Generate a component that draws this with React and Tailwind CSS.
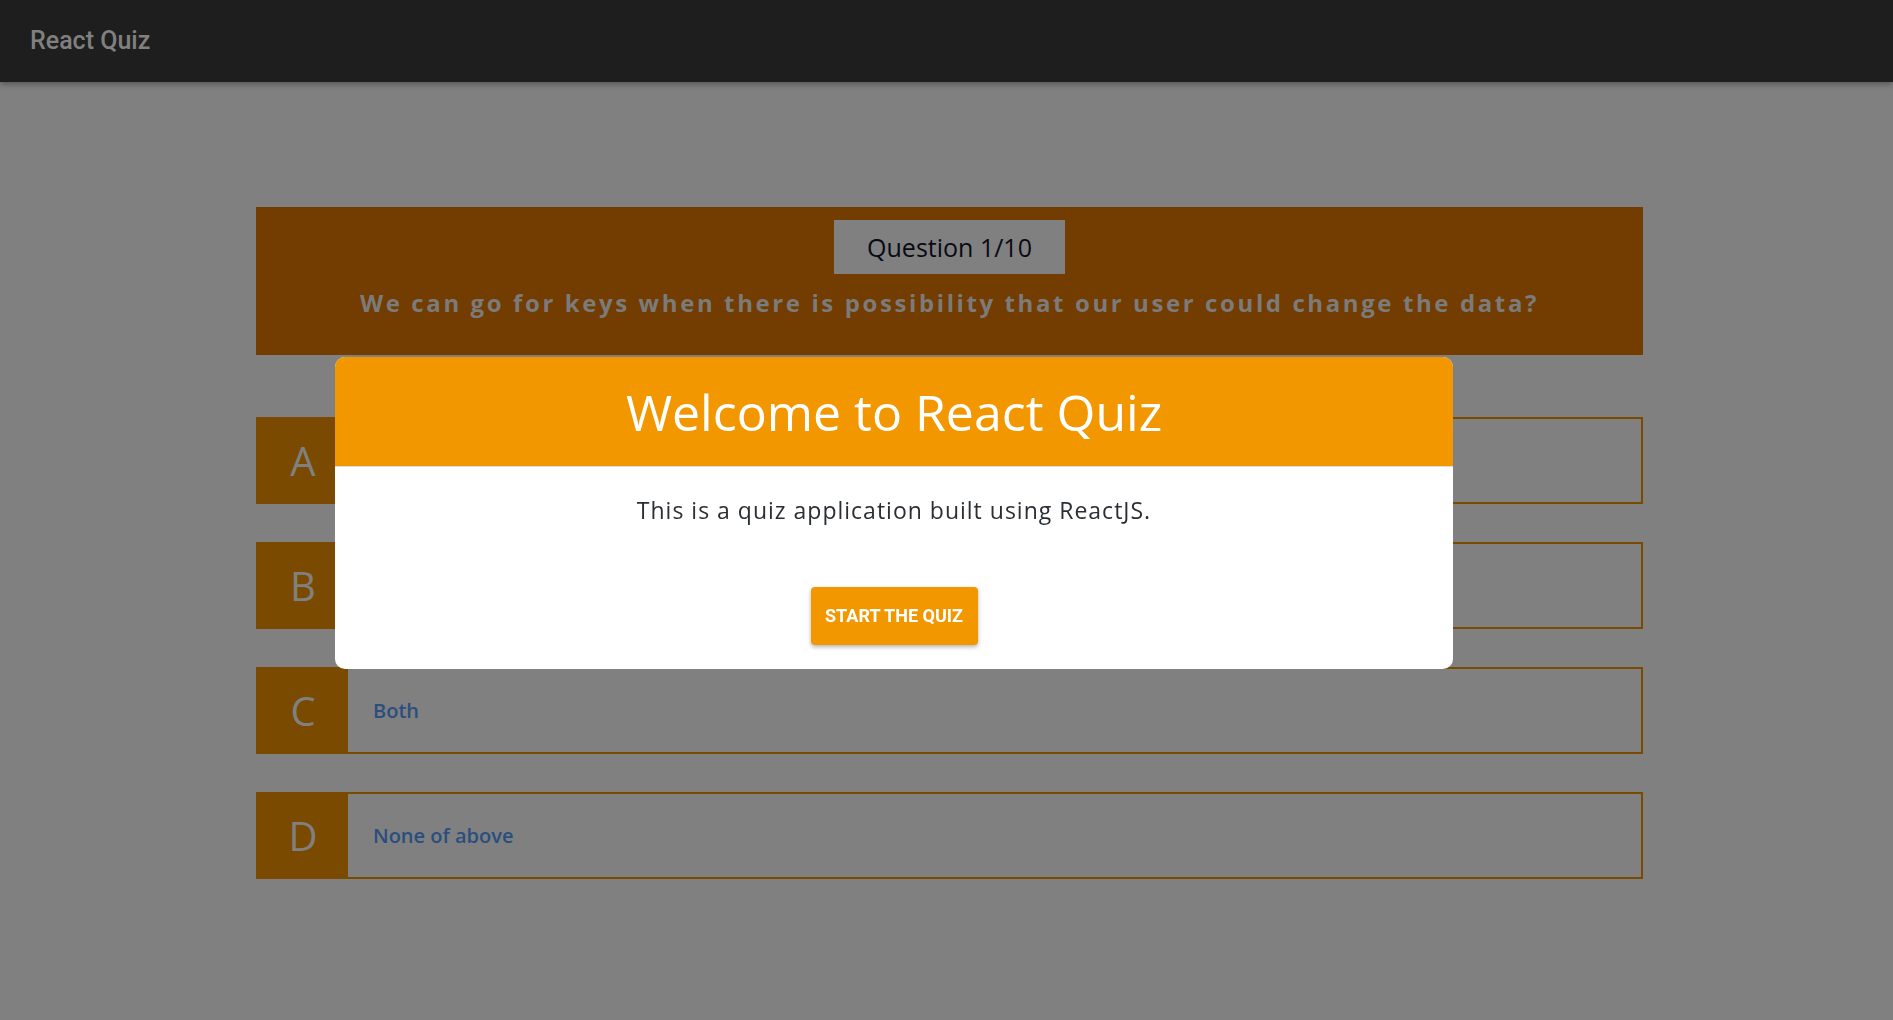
import React from "react";

const answers = [
  { key: "A", text: "" },
  { key: "B", text: "" },
  { key: "C", text: "Both" },
  { key: "D", text: "None of above" },
];

const open = { fontFamily: "'Open Sans', 'Noto Sans', sans-serif" };
const roboto = { fontFamily: "Roboto, 'Liberation Sans', sans-serif" };

export default function App() {
  return (
    <div className="min-h-[1020px] bg-[#808080]" style={open}>
      <header className="h-[82px] bg-[#1e1e1e] flex items-center px-[30px] shadow-[0_2px_6px_rgba(0,0,0,0.35)]">
        <div className="text-[25px] font-medium text-[#808080]" style={roboto}>React Quiz</div>
      </header>

      <main className="ml-[256px] w-[1387px] pt-[125px]">
        <div className="bg-[#733c00] h-[148px] flex flex-col items-center pt-[13px]">
          <div className="w-[231px] h-[54px] bg-[#808080] flex items-center justify-center pt-[2px] text-[25px] text-[#0a0a14]">
            Question 1/10
          </div>
          <div className="mt-[11px] text-[24px] font-bold tracking-[2.6px] text-[#7b7b7b]">
            We can go for keys when there is possibility that our user could change the data?
          </div>
        </div>

        <div className="mt-[62px] flex flex-col gap-[38px]">
          {answers.map((a) => (
            <div key={a.key} className="h-[87px] flex border-2 border-[#7a4a00]">
              <div className="w-[92px] -ml-[2px] -my-[2px] pl-[2px] bg-[#7a4a00] flex items-center justify-center text-[40px] text-[#808080]">
                {a.key}
              </div>
              <div className="flex items-center pl-[25px] text-[20px] font-semibold text-[#2a4e7e]">{a.text}</div>
            </div>
          ))}
        </div>
      </main>

      <div className="fixed inset-0">
        <div className="absolute left-[335px] top-[357px] w-[1118px] h-[312px] bg-white rounded-[10px] overflow-hidden flex flex-col">
          <div className="h-[110px] bg-[#f39700] border-b border-[#dddddd] flex items-center justify-center">
            <h1 className="text-[50px] text-white leading-none">Welcome to React Quiz</h1>
          </div>
          <div className="flex flex-col items-center">
            <p className="mt-[26px] text-[23px] tracking-[1px] text-[#2b2f33]">This is a quiz application built using ReactJS.</p>
            <button
              className="mt-[59px] w-[167px] h-[58px] bg-[#f39700] rounded-[4px] text-white text-[18px] font-bold uppercase shadow-[0_2px_4px_rgba(0,0,0,0.3)]"
              style={roboto}
            >
              Start the quiz
            </button>
          </div>
        </div>
      </div>
    </div>
  );
}
